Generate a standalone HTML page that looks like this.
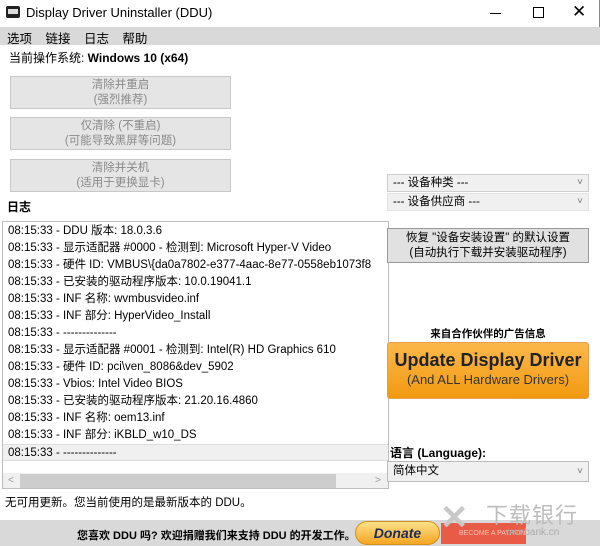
<!DOCTYPE html>
<html><head><meta charset="utf-8"><style>
*{margin:0;padding:0;box-sizing:border-box}
body{width:600px;height:546px;background:#fff;font-family:"Liberation Sans","Noto Sans CJK SC",sans-serif;font-size:12px;color:#000;position:relative;overflow:hidden}
.a{position:absolute;white-space:nowrap}
.btn{position:absolute;background:#e5e5e5;border:1px solid #c8c8c8;color:#8a8a8a;text-align:center;line-height:15px;font-size:11.5px;padding-top:1px}
.log div{height:17px;line-height:17px;padding-left:5px;font-size:11.5px;white-space:nowrap;overflow:hidden}
.combo{position:absolute;border:1px solid #cfcfcf;background:#f0f0f0;font-size:11.5px;line-height:16px;padding-left:5px}
.combo:after{content:"˅";position:absolute;right:5px;top:0;color:#777;font-size:10px}
</style></head><body>
<div class="a" style="left:0;top:0;width:600px;height:27px;border-right:1px solid #888"></div>
<div class="a" style="left:6px;top:6px;width:14px;height:12px;background:#222;border-radius:2px"><div style="margin:3px 2px;height:5px;background:#ddd"></div></div>
<div class="a" style="left:26px;top:5px;font-size:13px">Display Driver Uninstaller (DDU)</div>
<div class="a" style="left:490px;top:13px;width:11px;height:1px;background:#000"></div>
<div class="a" style="left:533px;top:7px;width:11px;height:11px;border:1px solid #000"></div>
<div class="a" style="left:572px;top:2px;font-size:17px;font-weight:100">✕</div>
<div class="a" style="left:0;top:27px;width:600px;height:18px;background:#d9d9d9"></div>
<div class="a" style="left:7px;top:28px;font-size:12.5px;word-spacing:10px">选项 链接 日志 帮助</div>
<div class="a" style="left:9px;top:49px;font-size:12px">当前操作系统: <b>Windows 10 (x64)</b></div>
<div class="btn" style="left:10px;top:76px;width:221px;height:33px">清除并重启<br>(强烈推荐)</div>
<div class="btn" style="left:10px;top:117px;width:221px;height:33px">仅清除 (不重启)<br>(可能导致黑屏等问题)</div>
<div class="btn" style="left:10px;top:159px;width:221px;height:33px">清除并关机<br>(适用于更换显卡)</div>
<div class="a" style="left:7px;top:198px;font-weight:bold">日志</div>
<div class="a log" style="left:2px;top:221px;width:387px;height:268px;border:1px solid #bdbdbd;padding-top:1px;overflow:hidden">
<div>08:15:33 - DDU 版本: 18.0.3.6</div>
<div>08:15:33 - 显示适配器 #0000 - 检测到: Microsoft Hyper-V Video</div>
<div>08:15:33 - 硬件 ID: VMBUS\{da0a7802-e377-4aac-8e77-0558eb1073f8</div>
<div>08:15:33 - 已安装的驱动程序版本: 10.0.19041.1</div>
<div>08:15:33 - INF 名称: wvmbusvideo.inf</div>
<div>08:15:33 - INF 部分: HyperVideo_Install</div>
<div>08:15:33 - --------------</div>
<div>08:15:33 - 显示适配器 #0001 - 检测到: Intel(R) HD Graphics 610</div>
<div>08:15:33 - 硬件 ID: pci\ven_8086&amp;dev_5902</div>
<div>08:15:33 - Vbios: Intel Video BIOS</div>
<div>08:15:33 - 已安装的驱动程序版本: 21.20.16.4860</div>
<div>08:15:33 - INF 名称: oem13.inf</div>
<div>08:15:33 - INF 部分: iKBLD_w10_DS</div>
<div style="background:#f0f0f0;border-top:1px solid #ddd;border-bottom:1px solid #ddd">08:15:33 - --------------</div>
<div class="a" style="left:0;top:251px;width:385px;height:16px;background:#f0f0f0;padding:0"></div>
<div class="a" style="left:17px;top:252px;width:316px;height:14px;background:#cdcdcd;padding:0"></div>
<div class="a" style="left:5px;top:250px;color:#999;font-size:10px;padding:0">&lt;</div>
<div class="a" style="left:372px;top:250px;color:#999;font-size:10px;padding:0">&gt;</div>
</div>
<div class="a" style="left:5px;top:494px;font-size:11.5px">无可用更新。您当前使用的是最新版本的 DDU。</div>
<div class="combo" style="left:387px;top:174px;width:202px;height:18px">--- 设备种类 ---</div>
<div class="combo" style="left:387px;top:193px;width:202px;height:18px;border-color:#e3e3e3">--- 设备供应商 ---</div>
<div class="a" style="left:387px;top:228px;width:202px;height:35px;background:#e1e1e1;border:1px solid #999;text-align:center;font-size:11.5px;line-height:15px;padding-top:2px">恢复 "设备安装设置" 的默认设置<br>(自动执行下载并安装驱动程序)</div>
<div class="a" style="left:387px;top:326px;width:202px;text-align:center;font-size:10.5px;font-weight:bold">来自合作伙伴的广告信息</div>
<div class="a" style="left:387px;top:342px;width:202px;height:57px;border-radius:3px;background:linear-gradient(#fbb84a,#f29a10);border:1px solid #e0a050;text-align:center">
<div style="font-size:18px;font-weight:bold;color:#222;margin-top:6px;line-height:22px">Update Display Driver</div>
<div style="font-size:13px;color:#333;line-height:18px">(And ALL Hardware Drivers)</div></div>
<div class="a" style="left:390px;top:444px;font-size:12px;font-weight:bold">语言 (Language):</div>
<div class="combo" style="left:387px;top:461px;width:202px;height:21px;line-height:19px;background:#f0f0f0;border-color:#bbb">简体中文</div>
<div class="a" style="left:0;top:520px;width:600px;height:26px;background:#d9d9d9"></div>
<div class="a" style="left:77px;top:527px;font-size:11px;font-weight:bold">您喜欢 DDU 吗? 欢迎捐赠我们来支持 DDU 的开发工作。</div>
<div class="a" style="left:355px;top:521px;width:85px;height:24px;border-radius:12px;background:linear-gradient(#ffe08a,#f5a623);border:1px solid #d4911a;text-align:center;font-style:italic;font-weight:bold;font-size:14px;color:#1a2a5a;line-height:22px">Donate</div>
<div class="a" style="left:441px;top:523px;width:85px;height:21px;background:#e85b46;color:#f6c3b8;font-size:7px;line-height:21px;padding-left:18px">BECOME A PATRON</div>
<div class="a" style="left:486px;top:498px;font-size:22px;color:#bdbdbd;letter-spacing:1px">下载银行</div>
<div class="a" style="left:440px;top:498px;font-size:34px;color:#c8c8c8;font-weight:bold">✕</div>
<div class="a" style="left:506px;top:527px;font-size:10px;color:#aaa">ownbank.cn</div>
</body></html>
